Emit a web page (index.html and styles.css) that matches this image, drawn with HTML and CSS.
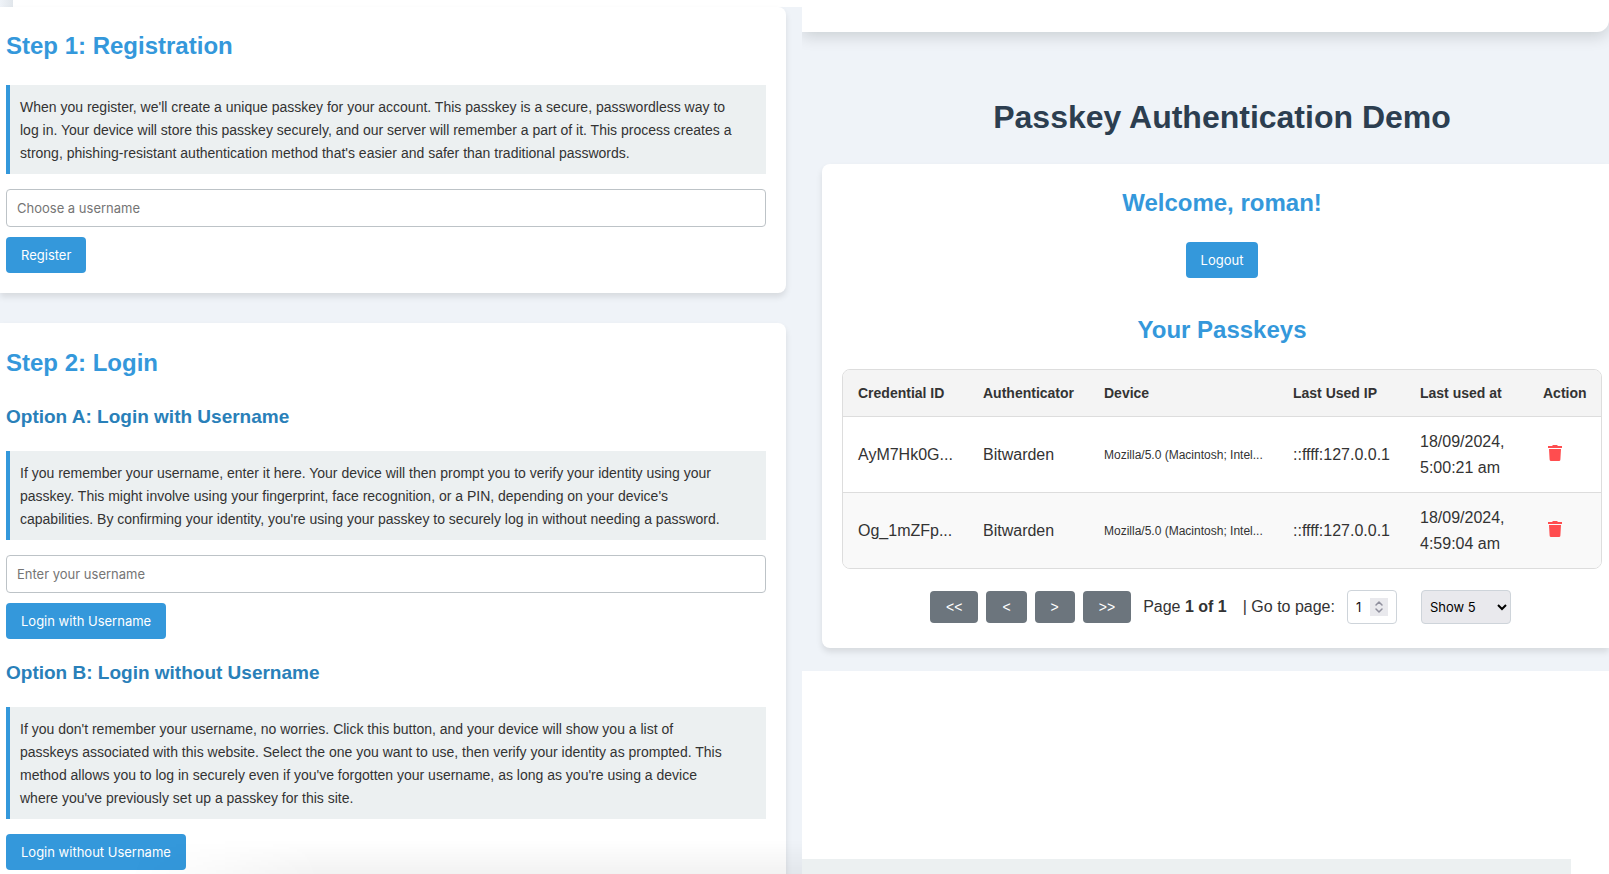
FILE: index.html
```html
<!DOCTYPE html>
<html lang="en">
<head>
<meta charset="utf-8">
<title>Passkey Authentication Demo</title>
<link rel="stylesheet" href="styles.css">
</head>
<body>
<main class="page">
  <div class="pane pane-left">
    <div class="strip"></div>
    <section class="card card-left">
      <h2>Step 1: Registration</h2>
      <p class="info">When you register, we'll create a unique passkey for your account. This passkey is a secure, passwordless way to log in. Your device will store this passkey securely, and our server will remember a part of it. This process creates a strong, phishing-resistant authentication method that's easier and safer than traditional passwords.</p>
      <input class="field" type="text" placeholder="Choose a username" aria-label="Choose a username">
      <button class="btn" type="button">Register</button>
    </section>
    <section class="card card-left card-login">
      <h2>Step 2: Login</h2>
      <div class="option">
        <h3>Option A: Login with Username</h3>
        <p class="info">If you remember your username, enter it here. Your device will then prompt you to verify your identity using your passkey. This might involve using your fingerprint, face recognition, or a PIN, depending on your device's capabilities. By confirming your identity, you're using your passkey to securely log in without needing a password.</p>
        <input class="field" type="text" placeholder="Enter your username" aria-label="Enter your username">
        <button class="btn" type="button">Login with Username</button>
      </div>
      <div class="option">
        <h3>Option B: Login without Username</h3>
        <p class="info">If you don't remember your username, no worries. Click this button, and your device will show you a list of passkeys associated with this website. Select the one you want to use, then verify your identity as prompted. This method allows you to log in securely even if you've forgotten your username, as long as you're using a device where you've previously set up a passkey for this site.</p>
        <button class="btn" type="button">Login without Username</button>
      </div>
    </section>
  </div>

  <div class="pane pane-right">
    <div class="panel-end"></div>
    <h1>Passkey Authentication Demo</h1>
    <section class="card card-right">
      <h2>Welcome, roman!</h2>
      <button class="btn logout" type="button">Logout</button>
      <h2>Your Passkeys</h2>
      <div class="table-frame">
        <table>
          <colgroup>
            <col class="col-id"><col class="col-auth"><col class="col-device"><col class="col-ip"><col class="col-date"><col class="col-action">
          </colgroup>
          <thead>
            <tr><th>Credential ID</th><th>Authenticator</th><th>Device</th><th>Last Used IP</th><th>Last used at</th><th>Action</th></tr>
          </thead>
          <tbody>
            <tr>
              <td>AyM7Hk0G...</td><td>Bitwarden</td><td class="device">Mozilla/5.0 (Macintosh; Intel...</td><td>::ffff:127.0.0.1</td><td class="date">18/09/2024, 5:00:21 am</td>
              <td><button class="delete" type="button" aria-label="Delete passkey"><svg viewBox="0 0 14 16" width="14" height="16"><path d="M0 1h4l1-1h4l1 1h4v2H0zM1 4h12l-.6 10.500a1.500 1.500 0 0 1-1.500 1.500H3.100a1.500 1.500 0 0 1-1.500-1.500z"/></svg></button></td>
            </tr>
            <tr>
              <td>Og_1mZFp...</td><td>Bitwarden</td><td class="device">Mozilla/5.0 (Macintosh; Intel...</td><td>::ffff:127.0.0.1</td><td class="date">18/09/2024, 4:59:04 am</td>
              <td><button class="delete" type="button" aria-label="Delete passkey"><svg viewBox="0 0 14 16" width="14" height="16"><path d="M0 1h4l1-1h4l1 1h4v2H0zM1 4h12l-.6 10.500a1.500 1.500 0 0 1-1.500 1.500H3.100a1.500 1.500 0 0 1-1.500-1.500z"/></svg></button></td>
            </tr>
          </tbody>
        </table>
      </div>
      <div class="pager">
        <div class="pager-buttons">
          <button type="button">&lt;&lt;</button>
          <button type="button">&lt;</button>
          <button type="button">&gt;</button>
          <button type="button">&gt;&gt;</button>
        </div>
        <span class="pager-text">Page <strong>1 of 1</strong></span>
        <label class="goto" for="page-number">| Go to page:</label>
        <div class="number">
          <input id="page-number" type="number" value="1" min="1">
          <svg class="spinner" viewBox="0 0 18 18" width="18" height="18"><path d="M6 7l3-3 3 3M6 11l3 3 3-3"/></svg>
        </div>
        <select aria-label="Rows per page"><option>Show 5</option><option>Show 10</option></select>
      </div>
    </section>
    <div class="lower">
      <div class="lower-block"></div>
    </div>
  </div>
</main>
</body>
</html>
```
FILE: styles.css
```css
* { box-sizing: border-box; }

body {
  margin: 0;
  background: #eff3f8;
  color: #333;
  font-family: "Liberation Sans", Arial, sans-serif;
  font-size: 16px;
  line-height: 26px;
}

.page {
  display: grid;
  grid-template-columns: 802fr 807fr;
  height: 100vh;
  overflow: hidden;
}

.pane {
  display: flex;
  flex-direction: column;
  min-width: 0;
  position: relative;
  overflow: hidden;
}

/* Soft shade along the bottom edge of the left pane */
.pane-left::after {
  content: "";
  position: absolute;
  left: 0;
  right: 0;
  bottom: 0;
  height: 34px;
  background: linear-gradient(to bottom, transparent, rgba(0, 0, 0, 0.05));
  mask-image: linear-gradient(to right, transparent 16%, #000 40%);
  pointer-events: none;
}

.strip {
  flex: none;
  height: 7px;
  background: linear-gradient(to right, #eff3f8, #e1e6eb 13px, #fff 13px);
}

h1, h2, h3, p { margin: 0; }

h1 {
  padding: 59px 7px 21px 40px;
  color: #2c3e50;
  font-size: 32px;
  line-height: 52px;
  text-align: center;
}

h2 {
  margin-bottom: 20px;
  color: #3498db;
  font-size: 24px;
  line-height: 38px;
}

h3 {
  margin-bottom: 19px;
  color: #2980b9;
  font-size: 19px;
  line-height: 30px;
}

.card {
  flex: none;
  background: #fff;
  box-shadow: 0 4px 6px rgba(0, 0, 0, 0.1);
}

.card-left {
  margin: 0 16px 30px 0;
  padding: 20px 20px 20px 6px;
  border-radius: 0 8px 8px 0;
}

.card-login {
  flex: 1 0 auto;
  margin-bottom: 0;
  padding-top: 21px;
  border-bottom-right-radius: 0;
}

.option + .option { margin-top: 19px; }

.info {
  margin-bottom: 15px;
  padding: 11px 32px 9px 10px;
  border-left: 4px solid #3498db;
  background: #ecf0f1;
  font-size: 14px;
  line-height: 23px;
}

.field {
  display: block;
  width: 100%;
  height: 38px;
  margin-bottom: 10px;
  padding: 0 10px;
  border: 1px solid #bdc3c7;
  border-radius: 4px;
  background: #fff;
  font-family: Inter, sans-serif;
  font-size: 13px;
}

.field::placeholder { color: #757575; }

.btn {
  display: block;
  height: 36px;
  padding: 0 15px;
  border: 0;
  border-radius: 4px;
  background: #3498db;
  color: #fff;
  font-family: Inter, sans-serif;
  font-size: 13px;
}

.panel-end {
  flex: none;
  height: 32px;
  border-radius: 0 0 12px 0;
  background: #fff;
  box-shadow: 0 4px 16px rgba(0, 20, 20, 0.16);
}

.card-right {
  margin-left: 20px;
  padding: 20px 7px 24px 20px;
  border-radius: 8px 0 0 8px;
  text-align: center;
}

.logout { margin: 0 auto 33px; }

.table-frame {
  overflow: hidden;
  border: 1px solid #ddd;
  border-radius: 8px;
}

table {
  width: 100%;
  border-collapse: separate;
  border-spacing: 0;
  table-layout: fixed;
  text-align: left;
}

.col-id { width: 125px; }
.col-auth { width: 121px; }
.col-device { width: 189px; }
.col-ip { width: 127px; }
.col-date { width: 123px; }
.col-action { width: 73px; }

th {
  padding: 10px 0 10px 15px;
  background: #f4f4f4;
  font-size: 14px;
  white-space: nowrap;
}

td {
  padding: 12px 0 11px 15px;
  border-top: 1px solid #ddd;
  white-space: nowrap;
}

tbody tr:nth-child(even) { background: #f9f9f9; }

.device { font-size: 12px; }

.date {
  padding-right: 15px;
  white-space: normal;
}

.delete {
  display: block;
  padding: 0 5px 4px;
  border: 0;
  background: none;
}

.delete svg {
  display: block;
  fill: #ff4d4f;
}

.pager {
  display: flex;
  align-items: center;
  justify-content: center;
  margin: 21px 3px 0 0;
}

.pager-buttons {
  display: flex;
  gap: 8px;
  margin-right: 12px;
}

.pager-buttons button {
  height: 32px;
  padding: 0 16px;
  border: 0;
  border-radius: 4px;
  background: #6c757d;
  color: #fff;
  font-family: "Liberation Sans", Arial, sans-serif;
  font-size: 14px;
}

.pager-text { margin-right: 16px; }

.goto { margin-right: 12px; }

.number {
  position: relative;
  width: 50px;
  height: 34px;
  margin-right: 24px;
}

.number input {
  width: 100%;
  height: 100%;
  padding: 0 0 0 8px;
  border: 1px solid #ced4da;
  border-radius: 4px;
  background: #fff;
  color: #111;
  font-family: Inter, sans-serif;
  font-size: 13px;
  appearance: textfield;
}

.spinner {
  position: absolute;
  top: 8px;
  right: 9px;
  background: #e9e9ed;
  fill: none;
  stroke: #8f8f9d;
  stroke-width: 1.5;
  stroke-linecap: round;
  stroke-linejoin: round;
  pointer-events: none;
}

select {
  width: 90px;
  height: 34px;
  padding: 0 4px;
  border: 1px solid #ced4da;
  border-radius: 4px;
  background-color: #e9e9ed;
  color: #000;
  font-family: Inter, sans-serif;
  font-size: 13px;
}

.lower {
  display: flex;
  flex: 1;
  flex-direction: column;
  justify-content: flex-end;
  margin-top: 23px;
  padding-right: 38px;
  background: #fff;
}

.lower-block {
  height: 15px;
  background: #ecf0f1;
}
```
